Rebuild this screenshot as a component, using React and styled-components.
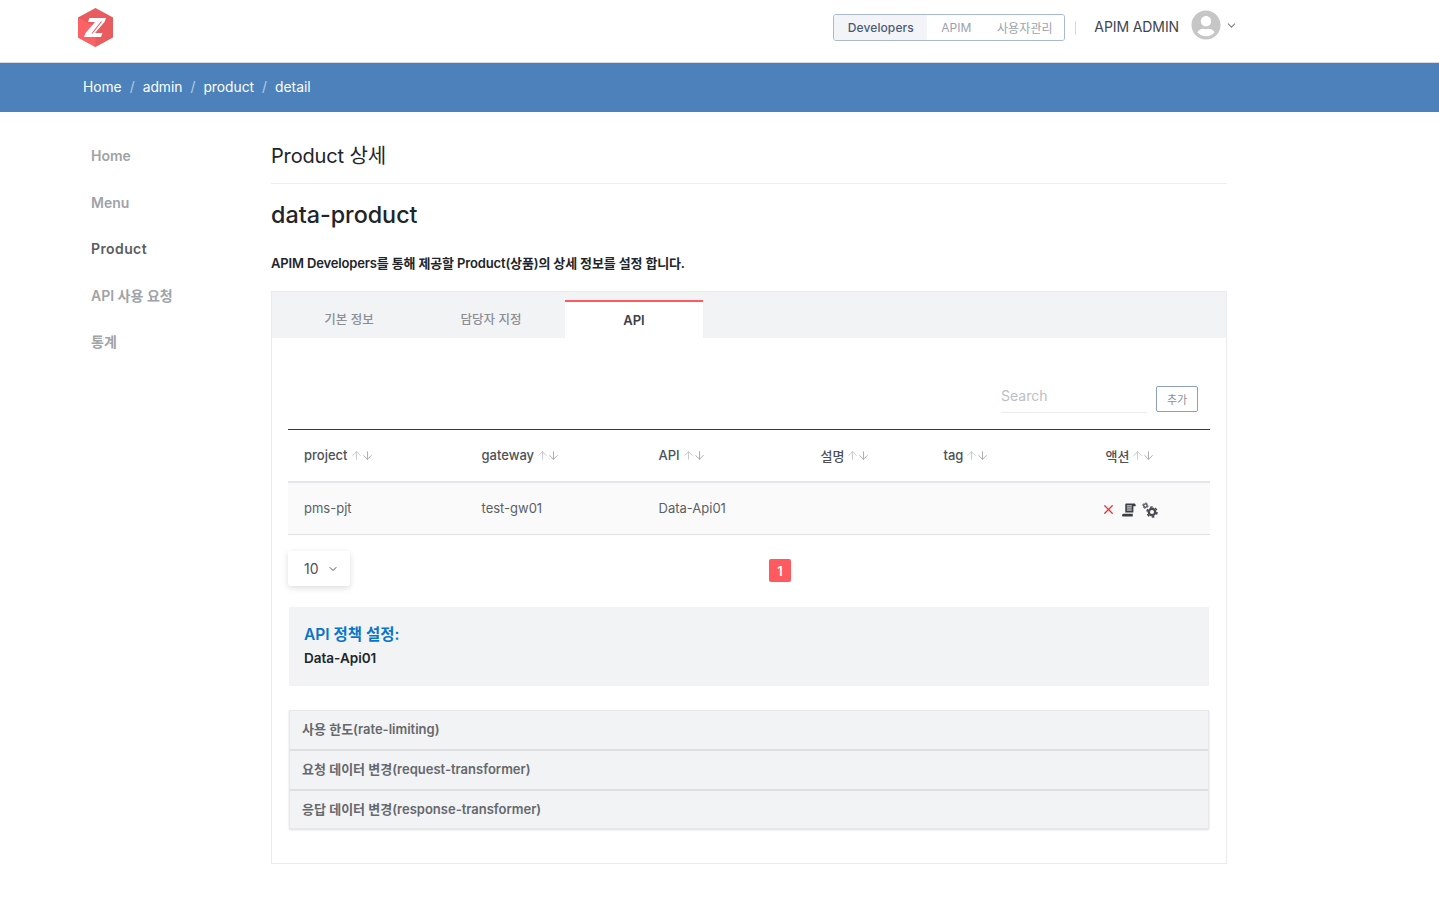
import React from "react";
import styled, { createGlobalStyle } from "styled-components";
import { ChevronDown, ArrowUp, ArrowDown, X } from "lucide-react";
import { FaUserCircle } from "react-icons/fa";

const Global = createGlobalStyle`
  html, body { margin: 0; padding: 0; background: #fff; }
  body { font-family: Inter, "Noto Sans CJK KR", sans-serif; color: #212529; }
  * { box-sizing: border-box; }
`;

const Page = styled.div`width: 1439px; min-height: 924px;`;

const Header = styled.header`
  height: 63px; display: flex; align-items: flex-start; justify-content: space-between;
  padding: 8px 201px 0 78px; border-bottom: 1px solid #d9dde1;
`;
const Logo = styled.svg`width: 35px; height: 39px; display: block;`;
const HeaderRight = styled.div`display: flex; align-items: center; height: 36px;`;
const Segmented = styled.div`
  display: flex; width: 232px; height: 27px; margin-top: 3px; border: 1px solid #a9bace; border-radius: 3px; overflow: hidden;
`;
const Segment = styled.div`
  display: flex; align-items: center; justify-content: center;
  width: ${(p) => p.$w}px; font-size: 12px; letter-spacing: .1px;
  color: ${(p) => (p.$on ? "#4a5a78" : "#9ba2ad")};
  background: ${(p) => (p.$on ? "#f2f4f7" : "#fff")};
  font-weight: ${(p) => (p.$on ? 500 : 400)};
`;
const Divider = styled.div`width: 1px; height: 14px; margin: 3px 18px 0 10px; background: #d6d8db;`;
const UserName = styled.span`font-size: 14px; letter-spacing: -.1px; color: #41454b; margin-right: 12px;`;
const UserIcon = styled(FaUserCircle)`width: 30px; height: 30px; color: #c6c6c6; margin-top: -2px;`;
const UserChevron = styled(ChevronDown)`width: 13px; height: 13px; color: #7a7f86; margin: -1px 0 0 4px;`;

const Crumbs = styled.nav`
  height: 49px; background: #4c81bb; display: flex; align-items: center; gap: 8px;
  padding: 0 0 2px 83px; font-size: 13.8px; color: #fff;
`;
const Sep = styled.span`color: #b5cce4;`;

const Body = styled.div`display: flex; align-items: flex-start;`;
const Side = styled.aside`width: 271px; padding: 34px 0 0 91px; display: flex; flex-direction: column; gap: 26.6px;`;
const SideItem = styled.div`
  font-size: 14px; line-height: 20px; font-weight: 600;
  color: ${(p) => (p.$on ? "#5a5d62" : "#a0a3a7")};
  letter-spacing: ${(p) => (p.$on ? ".4px" : "0")};
`;
const Main = styled.main`width: 956px; padding-top: 28px;`;
const Title = styled.h1`
  margin: 0; height: 44px; padding-top: 1px; font-size: 20px; line-height: 30px; font-weight: 400; color: #212529;
  letter-spacing: -.15px; border-bottom: 1px solid #eceef0;
`;
const ProductName = styled.h2`margin: 15px 0 0; font-size: 23.3px; line-height: 32px; font-weight: 500; color: #212529;`;
const Desc = styled.p`margin: 22px 0 0; font-size: 13px; line-height: 20px; font-weight: 600; color: #212529; letter-spacing: -.15px;`;

const Panel = styled.section`
  margin-top: 18px; height: 573px; border: 1px solid #e9ebee;
`;
const TabBar = styled.div`display: flex; gap: 4px; height: 46px; padding-left: 8px; background: #f2f3f5; padding-top: 8px;`;
const Tab = styled.div`
  width: 138px; display: flex; align-items: center; justify-content: center; padding-bottom: 1px;
  ${(p) => p.$on
    ? "font-size:13px;background:#fff;color:#3c4046;font-weight:600;border-top:2px solid #ff5a5f;margin-left:1px;"
    : "font-size:12.5px;color:#8b8e93;font-weight:500;"}
`;
const PanelBody = styled.div`padding: 0 16px;`;
const Tools = styled.div`display: flex; justify-content: flex-end; align-items: flex-start; gap: 9px; padding: 36px 12px 0 0; height: 91px;`;
const Search = styled.div`
  width: 146px; height: 39px; border-bottom: 1px solid #e9ebee; font-size: 14px; color: #bcbfc4; padding-top: 12px; line-height: 20px;
`;
const AddButton = styled.div`
  width: 42px; height: 26px; margin-top: 12px; border: 1px solid #8aa0bd; border-radius: 2px; font-size: 11px; color: #8c9097;
  display: flex; align-items: center; justify-content: center;
`;
const Row = styled.div`
  display: grid; grid-template-columns: 177.5px 177px 162px 123px 162px 1fr; align-items: center;
  height: ${(p) => p.$h}px; padding-bottom: 1px; font-size: 13px; color: #5b5f65;
  ${(p) => p.$head
    ? "border-top:1px solid #343a40;border-bottom:2px solid #e3e5e8;color:#4d5157;font-weight:500;"
    : "background:#fafafa;border-bottom:1px solid #dfe1e4;"}
`;
const Cell = styled.div`padding-left: 16px; display: flex; align-items: center;`;
const SortIcons = styled.span`display: inline-flex; margin-left: 4px;`;
const Arrow = styled.span`display: flex; color: ${(p) => p.$c}; margin-left: -2px;`;
const Actions = styled.div`display: flex; align-items: center; gap: 6px; padding: 3px 0 0 11.5px;`;

const Footer = styled.div`position: relative; height: 72px; padding-top: 16px;`;
const Select = styled.div`
  width: 62px; height: 35px; border-radius: 3px; background: #fff; box-shadow: 0 2px 6px rgba(0,0,0,.14);
  display: flex; align-items: center; gap: 8px; padding-left: 16px; font-size: 14px; color: #4d5157;
`;
const PageBtn = styled.div`
  position: absolute; left: 481px; top: 24px; width: 22px; height: 23px; background: #ff5a5f; color: #fff; border-radius: 2px;
  font-size: 13px; font-weight: 600; display: flex; align-items: center; justify-content: center;
`;
const Info = styled.div`margin: 0 1px; height: 79px; background: #f2f3f5; padding: 17px 15px 0;`;
const InfoTitle = styled.div`font-size: 15.5px; line-height: 20px; font-weight: 600; color: #0a74c9; padding-top: 1px;`;
const InfoName = styled.div`margin-top: 3px; font-size: 13.5px; line-height: 20px; font-weight: 600; color: #212529;`;
const Accordion = styled.div`margin: 24px 1px 0; box-shadow: 0 1px 2px rgba(0,0,0,.14); border: 1px solid #e6e8ea;`;
const AccItem = styled.div`
  height: 40px; background: #f2f3f5; padding: 0 12px 4px; display: flex; align-items: center;
  font-size: 13px; font-weight: 600; color: #65686d; border-bottom: 2px solid #dddfe2;
  &:last-child { border-bottom: 0; height: 37px; padding-bottom: 2px; }
`;

const Sort = () => (
  <SortIcons>
    <Arrow $c="#bcbec2"><ArrowUp size={13} strokeWidth={1.5} /></Arrow>
    <Arrow $c="#9a9da2"><ArrowDown size={13} strokeWidth={1.5} /></Arrow>
  </SortIcons>
);

const ScrollIcon = () => (
  <svg width="14" height="14" viewBox="0 0 15 14">
    <path d="M3.5 1.2C3.5.5 4 0 4.7 0H13c1 0 1.6.7 1.6 1.6V3h-2.4v6.8H3.5z" fill="#3b3f44" />
    <path d="M5.2 2.6h5.3M5.2 4.8h5.3M5.2 7h5.3" stroke="#fff" strokeWidth="1" />
    <path d="M0 13.2c0-1.4.7-2.2 1.7-2.2h9.8v3H.8z" fill="#3b3f44" />
  </svg>
);

const CogsIcon = () => (
  <svg width="16" height="16" viewBox="0 0 16 16" fill="none" stroke="#4a4e53">
    <circle cx="3.4" cy="3.6" r="1.7" strokeWidth="1.3" />
    <circle cx="3.4" cy="3.6" r="2.7" strokeWidth="1" strokeDasharray="2.1 2.1" />
    <circle cx="10" cy="10" r="3.2" strokeWidth="2.4" />
    <circle cx="10" cy="10" r="5" strokeWidth="1.6" strokeDasharray="2.6 2.64" />
  </svg>
);

const cols = ["project", "gateway", "API", "설명", "tag", "액션"];

export default function App() {
  return (
    <Page>
      <Global />
      <Header>
        <Logo viewBox="0 0 35 39">
          <polygon points="17.5,0 35,9.6 35,29.4 17.5,39 0,29.4 0,9.6" fill="#e85c5f" />
          <polygon points="0,9.6 17.5,19.5 17.5,39 0,29.4" fill="#fb6265" />
          <path d="M11.5 10H28L26.5 14 17 25h7.5L23 29H6l1.5-4L17 14h-7z" fill="#fff" />
          <path d="M14 25.5 23.5 13.5" stroke="#e85c5f" strokeWidth="1.1" />
        </Logo>
        <HeaderRight>
          <Segmented>
            <Segment $on $w={93}>Developers</Segment>
            <Segment $w={58}>APIM</Segment>
            <Segment $w={79}>사용자관리</Segment>
          </Segmented>
          <Divider />
          <UserName>APIM ADMIN</UserName>
          <UserIcon />
          <UserChevron />
        </HeaderRight>
      </Header>
      <Crumbs>
        <span>Home</span><Sep>/</Sep><span>admin</span><Sep>/</Sep><span>product</span><Sep>/</Sep><span>detail</span>
      </Crumbs>
      <Body>
        <Side>
          <SideItem>Home</SideItem>
          <SideItem>Menu</SideItem>
          <SideItem $on>Product</SideItem>
          <SideItem>API 사용 요청</SideItem>
          <SideItem>통계</SideItem>
        </Side>
        <Main>
          <Title>Product 상세</Title>
          <ProductName>data-product</ProductName>
          <Desc>APIM Developers를 통해 제공할 Product(상품)의 상세 정보를 설정 합니다.</Desc>
          <Panel>
            <TabBar>
              <Tab>기본 정보</Tab>
              <Tab>담당자 지정</Tab>
              <Tab $on>API</Tab>
            </TabBar>
            <PanelBody>
              <Tools>
                <Search>Search</Search>
                <AddButton>추가</AddButton>
              </Tools>
              <Row $head $h={54}>
                {cols.map((c) => <Cell key={c}>{c}<Sort /></Cell>)}
              </Row>
              <Row $h={52}>
                <Cell>pms-pjt</Cell>
                <Cell>test-gw01</Cell>
                <Cell>Data-Api01</Cell>
                <Cell />
                <Cell />
                <Actions>
                  <X size={15} color="#ec2a35" strokeWidth={2} />
                  <ScrollIcon />
                  <CogsIcon />
                </Actions>
              </Row>
              <Footer>
                <Select>10 <ChevronDown size={12} color="#555" /></Select>
                <PageBtn>1</PageBtn>
              </Footer>
              <Info>
                <InfoTitle>API 정책 설정:</InfoTitle>
                <InfoName>Data-Api01</InfoName>
              </Info>
              <Accordion>
                <AccItem>사용 한도(rate-limiting)</AccItem>
                <AccItem>요청 데이터 변경(request-transformer)</AccItem>
                <AccItem>응답 데이터 변경(response-transformer)</AccItem>
              </Accordion>
            </PanelBody>
          </Panel>
        </Main>
      </Body>
    </Page>
  );
}
